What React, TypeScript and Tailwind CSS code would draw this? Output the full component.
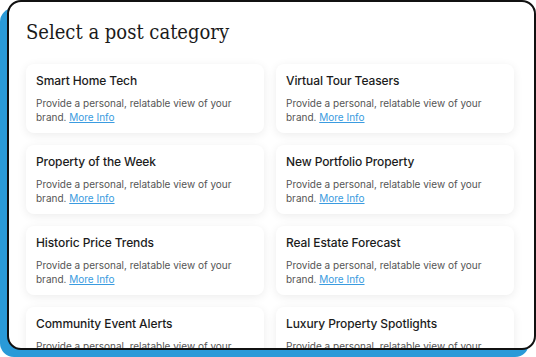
import React from "react";

const items = [
  "Smart Home Tech",
  "Virtual Tour Teasers",
  "Property of the Week",
  "New Portfolio Property",
  "Historic Price Trends",
  "Real Estate Forecast",
  "Community Event Alerts",
  "Luxury Property Spotlights",
];

export default function App() {
  return (
    <div className="relative w-[536px] h-[357px] bg-white overflow-hidden">
      <div className="absolute left-0 top-[8px] w-[529px] h-[349px] rounded-[14px] bg-[#2a9ad8]" />
      <div className="absolute left-[7px] top-0 w-[529px] h-[350px] rounded-[14px] border-2 border-[#111] bg-white overflow-hidden">
        <div className="pl-[17px] pt-[14px] h-full">
          <h1 className="text-[20px] leading-[32px] text-[#1a1a1a] [font-family:'DejaVu_Serif_Condensed','Liberation_Serif',serif]">
            Select a post category
          </h1>
          <div className="mt-[16px] grid grid-cols-[238px_238px] gap-x-[12px] gap-y-[12px]">
            {items.map((t) => (
              <div
                key={t}
                className="rounded-[8px] bg-white shadow-[0_2px_10px_rgba(0,0,0,0.08)] pl-[10px] pr-[8px] pt-[8px] pb-[9px] [font-family:Inter,'Noto_Sans',sans-serif]"
              >
                <div className="text-[12px] leading-[18px] font-medium text-[#1c1c1c] tracking-[-0.1px]">{t}</div>
                <p className="mt-[6px] text-[10px] leading-[14px] text-[#555]">
                  Provide a personal, relatable view of your brand.{" "}
                  <span className="text-[#3a9be0] underline">More Info</span>
                </p>
              </div>
            ))}
          </div>
        </div>
      </div>
    </div>
  );
}
